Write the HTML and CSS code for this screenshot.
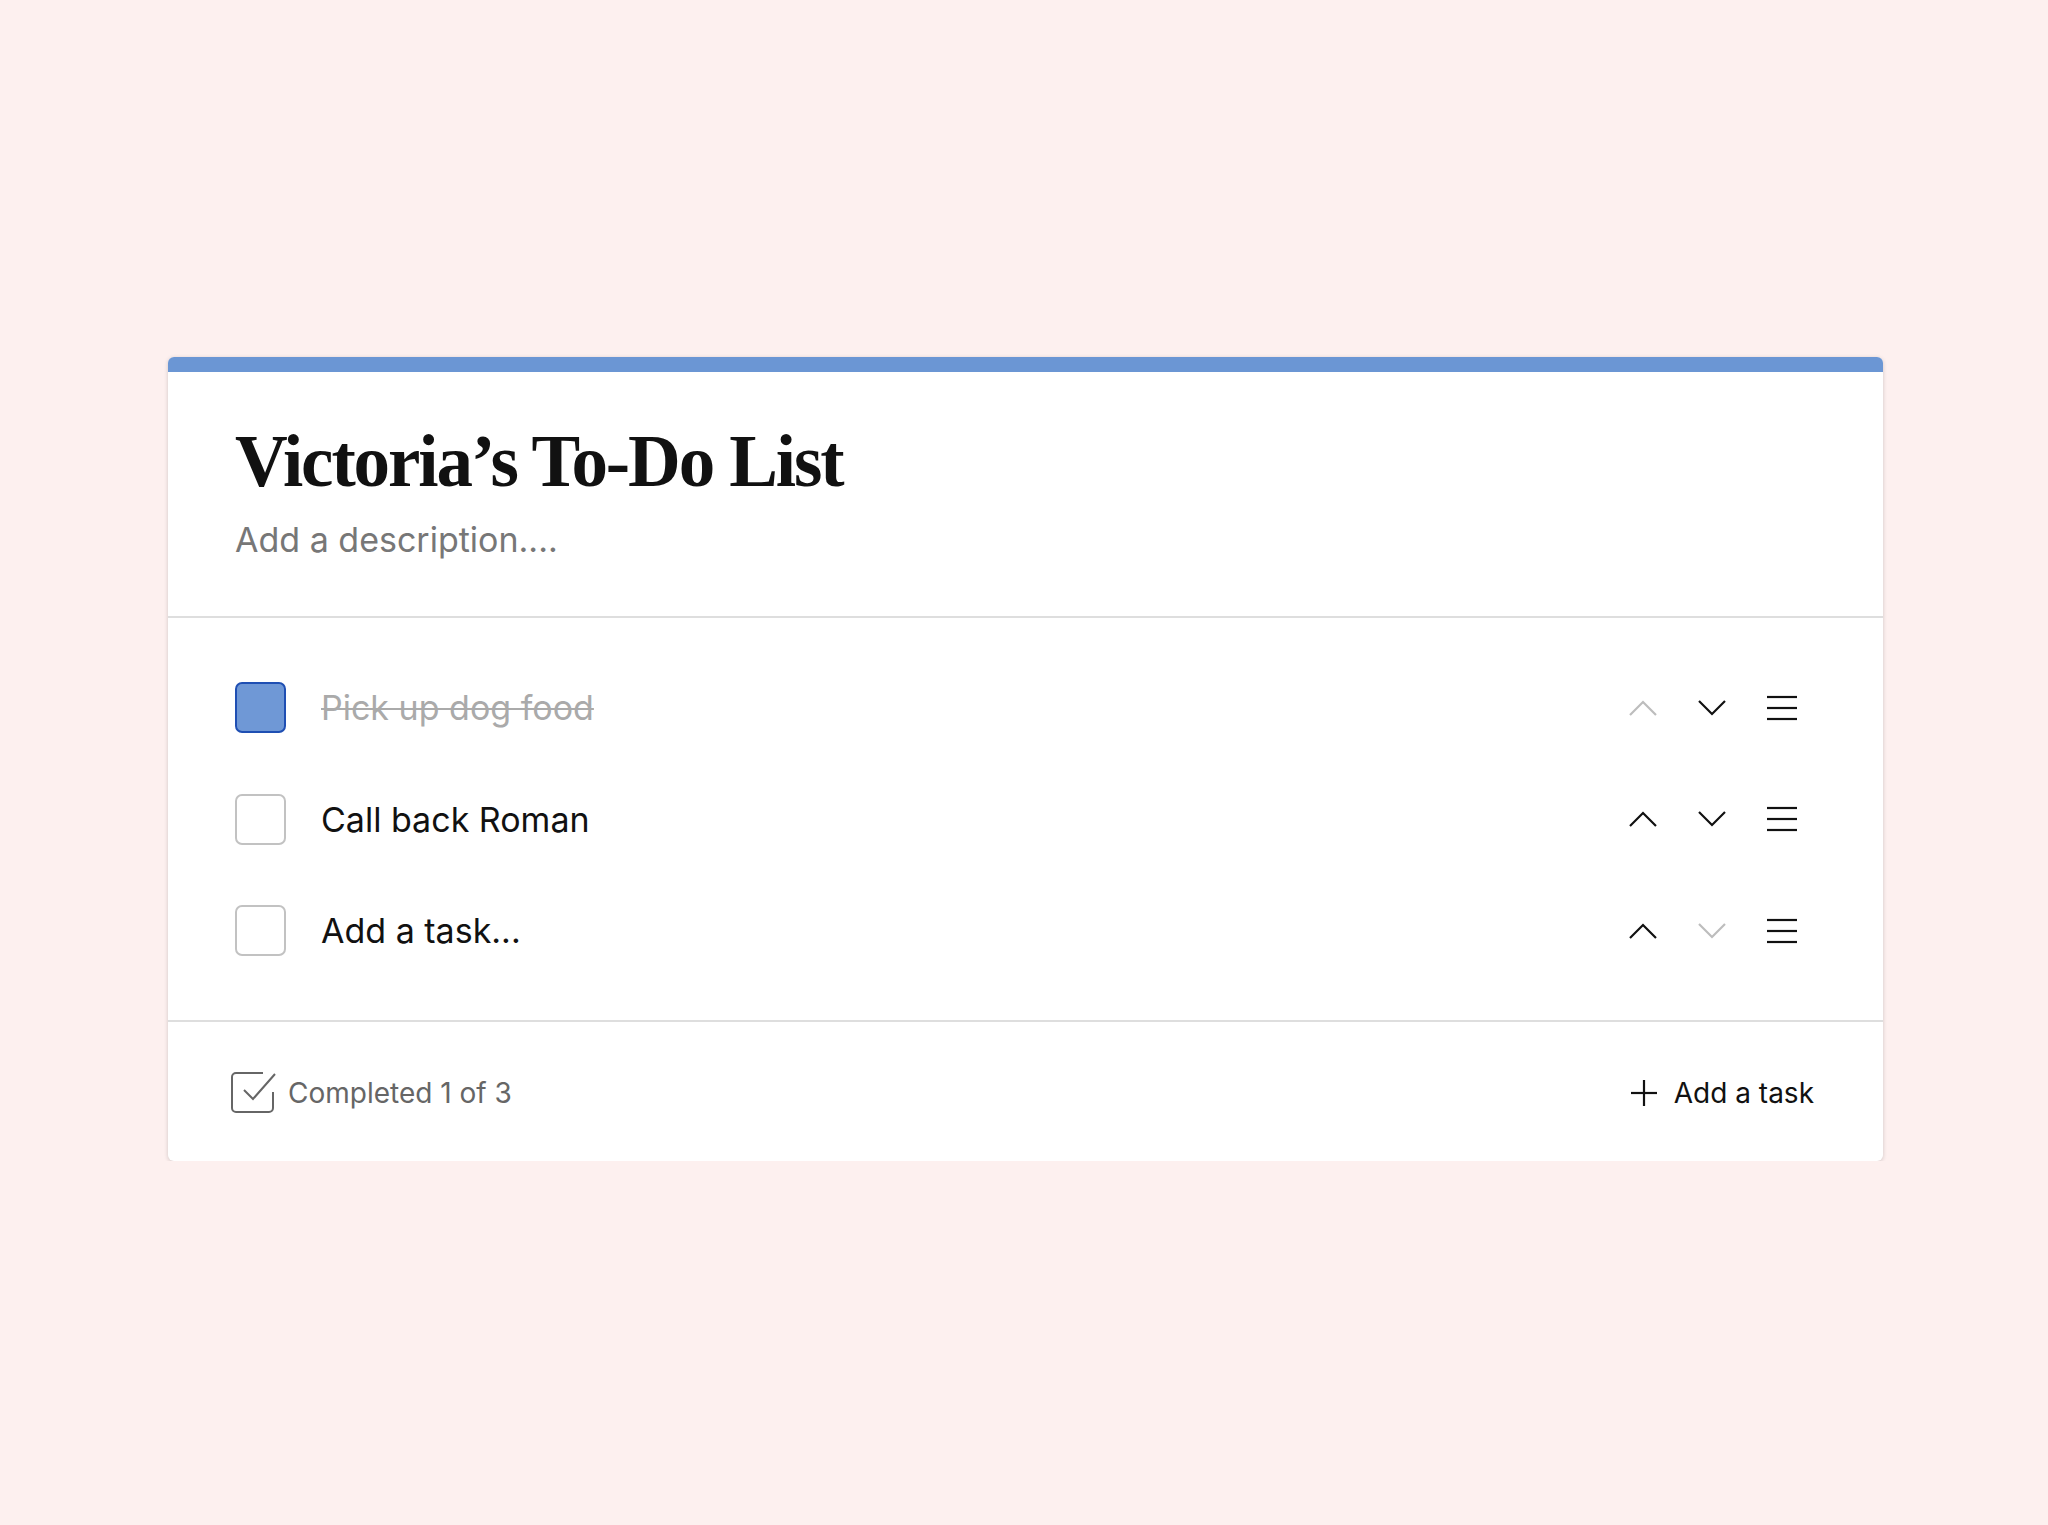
FILE: index.html
```html
<!DOCTYPE html>
<html lang="en">
<head>
<meta charset="utf-8">
<title>Victoria’s To-Do List</title>
<link rel="stylesheet" href="styles.css">
</head>
<body>
<main class="page">
  <section class="card">
    <div class="bar"></div>
    <header class="head">
      <h1 class="title">Victoria’s To-Do List</h1>
      <p class="desc">Add a description....</p>
    </header>
    <ul class="tasks">
      <li class="task done">
        <span class="box checked"></span>
        <span class="label">Pick up dog food</span>
        <div class="actions">
          <svg class="ico chev off" viewBox="0 0 28 16"><polyline points="1,15 14,2 27,15"/></svg>
          <svg class="ico chev" viewBox="0 0 28 16"><polyline points="1,1 14,14 27,1"/></svg>
          <svg class="ico menu" viewBox="0 0 30 26"><line x1="0" y1="2" x2="30" y2="2"/><line x1="0" y1="13" x2="30" y2="13"/><line x1="0" y1="24" x2="30" y2="24"/></svg>
        </div>
      </li>
      <li class="task">
        <span class="box"></span>
        <span class="label">Call back Roman</span>
        <div class="actions">
          <svg class="ico chev" viewBox="0 0 28 16"><polyline points="1,15 14,2 27,15"/></svg>
          <svg class="ico chev" viewBox="0 0 28 16"><polyline points="1,1 14,14 27,1"/></svg>
          <svg class="ico menu" viewBox="0 0 30 26"><line x1="0" y1="2" x2="30" y2="2"/><line x1="0" y1="13" x2="30" y2="13"/><line x1="0" y1="24" x2="30" y2="24"/></svg>
        </div>
      </li>
      <li class="task">
        <span class="box"></span>
        <span class="label">Add a task...</span>
        <div class="actions">
          <svg class="ico chev" viewBox="0 0 28 16"><polyline points="1,15 14,2 27,15"/></svg>
          <svg class="ico chev off" viewBox="0 0 28 16"><polyline points="1,1 14,14 27,1"/></svg>
          <svg class="ico menu" viewBox="0 0 30 26"><line x1="0" y1="2" x2="30" y2="2"/><line x1="0" y1="13" x2="30" y2="13"/><line x1="0" y1="24" x2="30" y2="24"/></svg>
        </div>
      </li>
    </ul>
    <footer class="foot">
      <div class="done-count">
        <svg class="ico check" viewBox="0 0 46 42"><path d="M42 20v16a4 4 0 0 1-4 4H5a4 4 0 0 1-4-4V5a4 4 0 0 1 4-4h27"/><polyline points="13,18 22,27 44,2"/></svg>
        <span>Completed 1 of 3</span>
      </div>
      <button class="add">
        <svg class="ico plus" viewBox="0 0 26 26"><line x1="13" y1="0" x2="13" y2="26"/><line x1="0" y1="13" x2="26" y2="13"/></svg>
        <span>Add a task</span>
      </button>
    </footer>
  </section>
</main>
</body>
</html>
```

FILE: styles.css
```css
* { box-sizing: border-box; }
html, body { margin: 0; padding: 0; }
body {
  background: #fdf0ef;
  font-family: "Inter", "Noto Sans", sans-serif;
  color: #111;
}
.page {
  padding-top: 357px;
  padding-left: 168px;
}
.card {
  width: 1715px;
  background: #fff;
  border-radius: 6px;
  overflow: hidden;
  box-shadow: 0 1px 4px rgba(0, 0, 0, 0.18);
}
.bar {
  height: 15px;
  background: #6b96d4;
}
.head {
  padding: 53px 67px 0;
  height: 246px;
  border-bottom: 2px solid #dedede;
}
.title {
  margin: 0;
  font-family: "Liberation Serif", "DejaVu Serif", serif;
  font-weight: 700;
  font-size: 73px;
  line-height: 73px;
  letter-spacing: -2.1px;
  color: #111;
}
.desc {
  margin: 22px 0 0;
  font-size: 34px;
  line-height: 40px;
  color: #777;
}
.tasks {
  list-style: none;
  margin: 0;
  padding: 34px 0 33px 67px;
  border-bottom: 2px solid #dedede;
}
.task {
  display: flex;
  align-items: center;
  height: 111.5px;
  padding-right: 86px;
}
.box {
  width: 51px;
  height: 51px;
  border-radius: 7px;
  border: 2px solid #c2c2c2;
  flex: none;
}
.box.checked {
  background: #6f98d6;
  border-color: #1f4fb3;
}
.label {
  margin-left: 35px;
  font-size: 34px;
  flex: 1;
}
.done .label {
  color: #aaa;
  text-decoration: line-through;
  text-decoration-thickness: 2px;
}
.actions {
  display: flex;
  align-items: center;
  gap: 41px;
}
.ico {
  fill: none;
  stroke: #111;
  stroke-width: 2.2;
  display: block;
}
.chev { width: 28px; height: 16px; }
.chev.off { stroke: #bdbdbd; }
.menu { width: 30px; height: 26px; }
.foot {
  display: flex;
  align-items: center;
  justify-content: space-between;
  height: 139px;
  padding: 4px 69px 0 63px;
}
.done-count {
  display: flex;
  align-items: center;
  gap: 11px;
  font-size: 28px;
  color: #666;
}
.check { width: 46px; height: 42px; stroke: #666; stroke-width: 2; }
.add {
  display: flex;
  align-items: center;
  gap: 17px;
  border: 0;
  background: none;
  padding: 0;
  font-family: inherit;
  font-size: 28px;
  color: #111;
}
.plus { width: 26px; height: 26px; stroke-width: 2.2; }
```
